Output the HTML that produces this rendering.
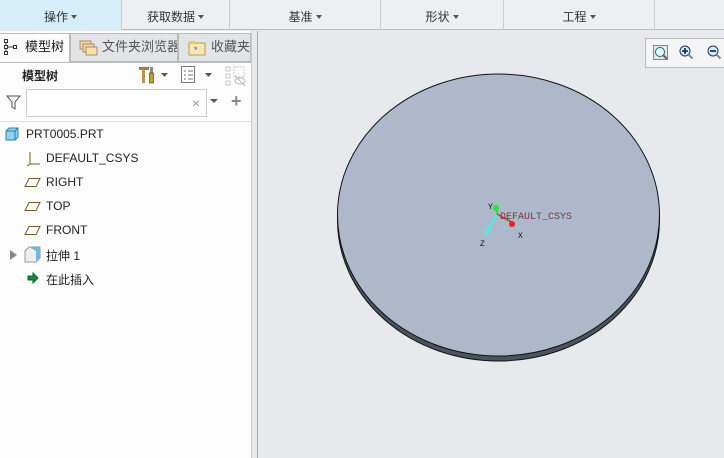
<!DOCTYPE html>
<html><head><meta charset="utf-8"><style>
*{margin:0;padding:0;box-sizing:border-box}
body{width:724px;height:458px;overflow:hidden;background:#e8e9ed;font-family:"Liberation Sans","Noto Sans CJK SC",sans-serif;font-size:12px;color:#222;position:relative}
.abs{position:absolute}
.top{left:0;top:0;width:724px;height:30px;background:#eeeff1;border-bottom:1px solid #bbb}
.tc{position:absolute;top:0;height:30px;line-height:34px;text-align:center;border-right:1px solid #ccc;font-size:12px;color:#333}
.tri{display:inline-block;border-left:3.5px solid transparent;border-right:3.5px solid transparent;border-top:4px solid #555;margin-left:3px;vertical-align:2px}
.panel{left:0;top:31px;width:251px;height:427px;background:#fcfcfc}
.tab{position:absolute;top:33px;height:29px;line-height:26px;font-size:13px;border:1px solid #bbb;background:#e3e4e6;color:#555}
.row{position:absolute;left:46px;font-size:12px;color:#222}
</style></head><body>
<div class="abs top">
<div class="tc" style="left:0;width:122px;background:#d5eefa">操作<span class="tri"></span></div>
<div class="tc" style="left:122px;width:108px">获取数据<span class="tri"></span></div>
<div class="tc" style="left:230px;width:151px">基准<span class="tri"></span></div>
<div class="tc" style="left:381px;width:123px">形状<span class="tri"></span></div>
<div class="tc" style="left:504px;width:151px">工程<span class="tri"></span></div>
</div>
<div class="abs panel"></div>
<div class="abs" style="left:251px;top:31px;width:7px;height:427px;background:#e8e9ed;border-left:1px solid #ccc;border-right:1px solid #aaa"></div>
<div class="abs" style="left:0;top:62px;width:251px;height:1px;background:#bbb"></div>
<div class="tab" style="left:0;width:70px;background:#fcfcfc;border-bottom:none;color:#222;border-left:none">
<svg class="abs" style="left:4px;top:5px" width="14" height="16"><rect x="0.5" y="0.5" width="3" height="3" fill="none" stroke="#333"/><rect x="0.5" y="6.5" width="3" height="3" fill="none" stroke="#333"/><rect x="0.5" y="12.5" width="3" height="3" fill="none" stroke="#333"/><rect x="9.5" y="6.5" width="3" height="3" fill="none" stroke="#333"/><path d="M2 4v2M2 10v2M4 8h5" stroke="#333"/></svg>
<span style="position:absolute;left:25px">模型树</span></div>
<div class="tab" style="left:70px;width:108px;overflow:hidden;white-space:nowrap">
<svg class="abs" style="left:8px;top:5px" width="20" height="18"><rect x="1" y="2" width="11" height="8" fill="#f4d990" stroke="#a88"/><rect x="4" y="5" width="11" height="8" fill="#f4d990" stroke="#a88"/><rect x="7" y="8" width="11" height="8" fill="#f8e2a0" stroke="#a88"/></svg>
<span style="position:absolute;left:31px">文件夹浏览器</span></div>
<div class="tab" style="left:178px;width:73px">
<svg class="abs" style="left:9px;top:6px" width="18" height="16"><rect x="1" y="3" width="16" height="12" fill="#f6e6b0" stroke="#b89a50"/><rect x="1" y="1" width="7" height="3" fill="#e8c870"/><text x="6" y="13" font-size="9" fill="#36c">*</text></svg>
<span style="position:absolute;left:32px">收藏夹</span></div>
<div class="abs" style="left:22px;top:67px;font-weight:bold;font-size:12px">模型树</div>
<svg class="abs" style="left:137px;top:65px" width="40" height="20"><rect x="2" y="2" width="10" height="3" fill="#a87a30"/><rect x="5" y="4" width="3" height="14" fill="#c09050"/><rect x="13" y="2" width="3" height="6" fill="#888"/><rect x="12.5" y="8" width="4" height="10" fill="#c8a030" stroke="#333" stroke-width=".6"/><path d="M24 8h7l-3.5 4z" fill="#555"/></svg>
<svg class="abs" style="left:180px;top:65px" width="36" height="20"><rect x="1.5" y="1.5" width="13" height="16" fill="#fff" stroke="#777"/><path d="M4 6h2M8 6h5M4 10h2M8 10h5M4 14h2M8 14h5" stroke="#777"/><path d="M25 8h7l-3.5 4z" fill="#555"/></svg>
<svg class="abs" style="left:225px;top:66px" width="22" height="20" opacity=".4"><rect x="1" y="1" width="4" height="4" fill="none" stroke="#777"/><rect x="1" y="8" width="4" height="4" fill="none" stroke="#777"/><rect x="1" y="15" width="4" height="4" fill="none" stroke="#777"/><rect x="9" y="1" width="10" height="10" fill="none" stroke="#777" stroke-dasharray="2 1"/><ellipse cx="15" cy="15" rx="5" ry="3" fill="none" stroke="#555"/><path d="M10 10l10 10" stroke="#555"/></svg>
<svg class="abs" style="left:6px;top:95px" width="16" height="16"><path d="M1 1h13l-5 6v7l-3-2v-5z" fill="none" stroke="#555"/></svg>
<div class="abs" style="left:26px;top:89px;width:181px;height:28px;background:#fff;border:1px solid #ccc"><span style="position:absolute;right:6px;top:5px;color:#999;font-size:14px">×</span></div>
<svg class="abs" style="left:210px;top:99px" width="10" height="6"><path d="M0 0h8l-4 4z" fill="#555"/></svg>
<div class="abs" style="left:231px;top:91px;font-size:18px;font-weight:bold;color:#888">+</div>
<div class="abs" style="left:0;top:121px;width:251px;height:1px;background:#ddd"></div>
<svg class="abs" style="left:5px;top:127px" width="14" height="14"><path d="M1 4l3-3h9v9l-3 3H1z" fill="#8fd3f0" stroke="#2a7fb0"/><path d="M1 4h9v9M10 4l3-3" fill="none" stroke="#2a7fb0"/></svg>
<div class="row" style="left:26px;top:127px">PRT0005.PRT</div>
<svg class="abs" style="left:25px;top:150px" width="17" height="17"><path d="M5 2v12h10M5 14l-3 2" stroke="#7a5a20" fill="none"/></svg>
<div class="row" style="top:151px">DEFAULT_CSYS</div>
<svg class="abs" style="left:24px;top:177px" width="18" height="12"><path d="M5 1.5h11l-4 8H1z" fill="none" stroke="#7a5a20"/></svg>
<div class="row" style="top:175px">RIGHT</div>
<svg class="abs" style="left:24px;top:201px" width="18" height="12"><path d="M5 1.5h11l-4 8H1z" fill="none" stroke="#7a5a20"/></svg>
<div class="row" style="top:199px">TOP</div>
<svg class="abs" style="left:24px;top:225px" width="18" height="12"><path d="M5 1.5h11l-4 8H1z" fill="none" stroke="#7a5a20"/></svg>
<div class="row" style="top:223px">FRONT</div>
<svg class="abs" style="left:10px;top:250px" width="8" height="10"><path d="M0 0l7 5-7 5z" fill="#888"/></svg>
<svg class="abs" style="left:24px;top:246px" width="18" height="17"><path d="M1 5l4-4h11v11l-4 4H1z" fill="#eee" stroke="#999"/><path d="M5 1h11v11l-4 4V5z" fill="#6fb8e0"/></svg>
<div class="row" style="top:247px">拉伸 1</div>
<svg class="abs" style="left:27px;top:272px" width="12" height="12"><path d="M1 4h5V1l5 5-5 5V8H1z" fill="#1a8a1a" stroke="#063"/></svg>
<div class="row" style="top:271px">在此插入</div>
<div class="abs" style="left:645px;top:38px;width:79px;height:30px;background:#f5f5f5;border:1px solid #bbb;border-right:none"></div>
<svg class="abs" style="left:652px;top:44px" width="72" height="20"><rect x="1.5" y="1.5" width="14" height="14" fill="#e5e5e5" stroke="#888"/><circle cx="8" cy="8" r="4.5" fill="#dff" stroke="#267"/><path d="M11 11l4 4" stroke="#666" stroke-width="2"/><circle cx="33" cy="7" r="5" fill="#cef" stroke="#236"/><path d="M30 7h6M33 4v6" stroke="#123" stroke-width="1.6"/><path d="M36.5 10.5l4 4" stroke="#888" stroke-width="2"/><circle cx="61" cy="7" r="5" fill="#cef" stroke="#236"/><path d="M58 7h6" stroke="#123" stroke-width="1.6"/><path d="M64.5 10.5l4 4" stroke="#888" stroke-width="2"/></svg>
<svg class="abs" style="left:258px;top:31px" width="466" height="427">
<ellipse cx="240.5" cy="189" rx="161" ry="141" fill="#4d535e" stroke="#111"/>
<ellipse cx="240.5" cy="184" rx="161" ry="141" fill="#adb9ca" stroke="#111"/>
<path d="M239 183l-12 22" stroke="#3fd" stroke-width="1.5"/>
<path d="M239 183l18 10" stroke="#c33" stroke-width="1.5"/>
<path d="M239 183v-6" stroke="#3c3" stroke-width="1.5"/>
<circle cx="238" cy="177" r="3" fill="#2e2"/>
<circle cx="254" cy="193" r="3" fill="#e22"/>
<circle cx="231" cy="198" r="2.5" fill="#4ee"/>
<text x="242" y="188" font-family="Liberation Mono,monospace" font-size="10" fill="#7a3a3a">DEFAULT_CSYS</text>
<text x="230" y="178" font-family="Liberation Mono,monospace" font-size="8" fill="#111">Y</text>
<text x="260" y="207" font-family="Liberation Mono,monospace" font-size="8" fill="#111">X</text>
<text x="222" y="215" font-family="Liberation Mono,monospace" font-size="8" fill="#111">Z</text>
</svg>
</body></html>
